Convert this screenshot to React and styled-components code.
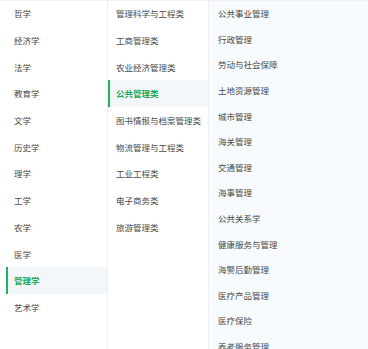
import React from 'react'
import styled, {createGlobalStyle} from 'styled-components'

const GlobalStyle = createGlobalStyle`
  html, body {
    margin: 0;
    padding: 0;
    background: #ffffff;
  }
  body {
    font-family: "Noto Sans CJK SC", "Noto Sans", sans-serif;
  }
`

const subjects = ['哲学', '经济学', '法学', '教育学', '文学', '历史学', '理学', '工学', '农学', '医学', '管理学', '艺术学']
const classes = ['管理科学与工程类', '工商管理类', '农业经济管理类', '公共管理类', '图书情报与档案管理类', '物流管理与工程类', '工业工程类', '电子商务类', '旅游管理类']
const majors = ['公共事业管理', '行政管理', '劳动与社会保障', '土地资源管理', '城市管理', '海关管理', '交通管理', '海事管理', '公共关系学', '健康服务与管理', '海警后勤管理', '医疗产品管理', '医疗保险', '养老服务管理']

function App() {
    return (
        <>
            <GlobalStyle/>
            <Panel>
                <Column width="101px">
                    {subjects.map((s) => (
                        <Item key={s} active={s === '管理学'}>{s}</Item>
                    ))}
                </Column>
                <Column width="100px">
                    {classes.map((c) => (
                        <Item key={c} active={c === '公共管理类'}>{c}</Item>
                    ))}
                </Column>
                <Majors>
                    {majors.map((m) => (
                        <Major key={m}>{m}</Major>
                    ))}
                </Majors>
            </Panel>
        </>
    )
}

const Panel = styled.div`
    display: flex;
    height: 349px;
    padding-left: 6px;
    border-top: 1px solid #eef0f2;
    box-sizing: border-box;
    overflow: hidden;
`

const Column = styled.div`
    width: ${(p) => p.width};
    flex-shrink: 0;
    background: #ffffff;
    border-right: 1px solid #eceef1;
    box-sizing: content-box;
    margin-top: -1px;
`

const Item = styled.div`
    height: 26.7px;
    display: flex;
    align-items: center;
    padding-left: ${(p) => (p.active ? '6px' : '8px')};
    font-size: 8.5px;
    white-space: nowrap;
    color: ${(p) => (p.active ? '#1aa85c' : '#4a4a4a')};
    font-weight: ${(p) => (p.active ? 700 : 400)};
    background: ${(p) => (p.active ? '#f4f7f9' : 'transparent')};
    border-left: ${(p) => (p.active ? '2px solid #22b266' : 'none')};
`

const Majors = styled.div`
    flex: 1;
    background: #f8fbfd;
    margin-top: -1px;
    padding-top: 0.5px;
`

const Major = styled.div`
    height: 25.6px;
    display: flex;
    align-items: center;
    padding-left: 9px;
    font-size: 8.5px;
    white-space: nowrap;
    color: #4a4a4a;
`

export default App
